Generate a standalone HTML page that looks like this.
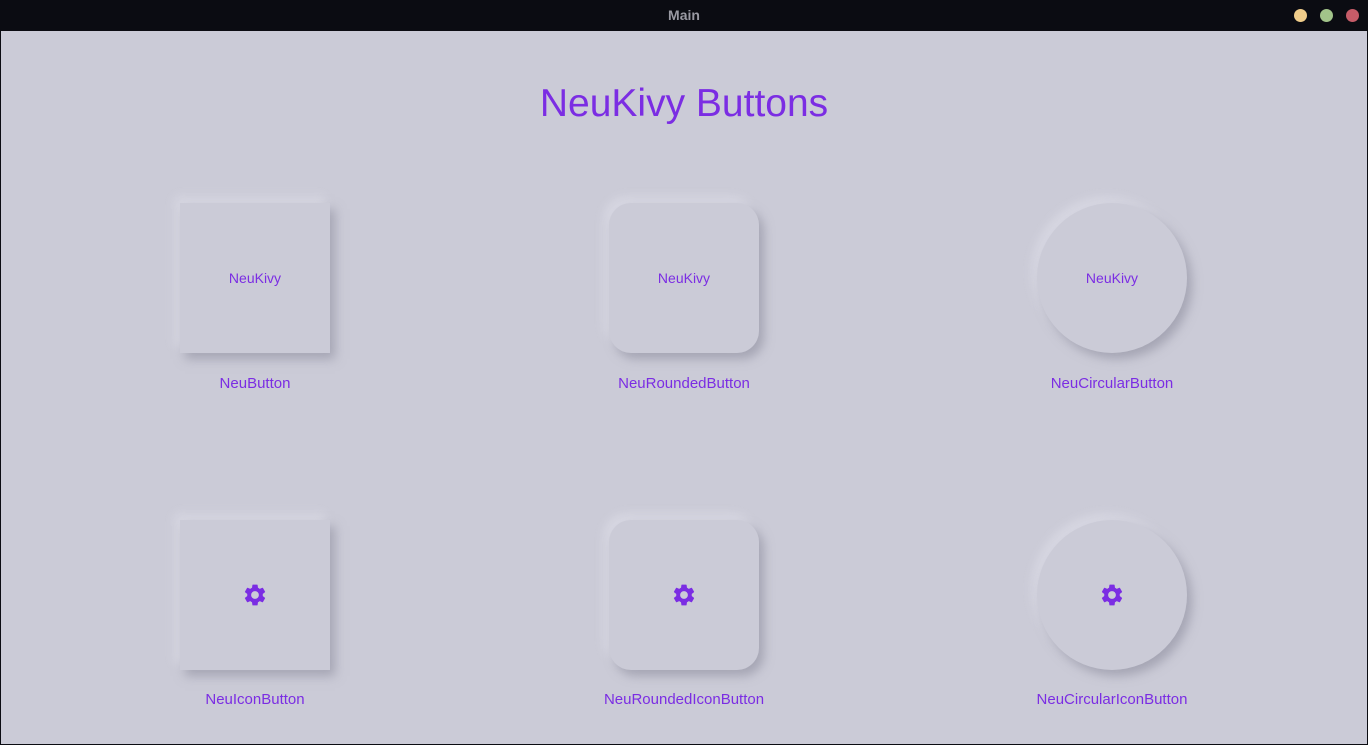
<!DOCTYPE html>
<html><head><meta charset="utf-8"><style>
*{margin:0;padding:0;box-sizing:border-box}
body{width:1368px;height:745px;background:#cbcbd7;font-family:"Liberation Sans",sans-serif;position:relative;overflow:hidden;border:1px solid #0b0c12}
.bar{position:absolute;left:-1px;top:-1px;width:1368px;height:31px;background:#0b0c12;color:#9a9aa3;font-weight:bold;font-size:14px;text-align:center;line-height:31px}
.dot{position:absolute;top:9px;width:13px;height:13px;border-radius:50%}
h1{position:absolute;top:81px;left:-1px;width:1368px;text-align:center;font-weight:normal;font-size:39px;color:#7b2de3}
.b{position:absolute;width:150px;height:150px;background:#cbcbd7;box-shadow:5px 6px 10px rgba(150,150,165,.7),-5px -6px 10px rgba(225,225,235,.6);display:flex;align-items:center;justify-content:center;color:#7b2de3;font-size:14px}
.r{border-radius:22px}.c{border-radius:50%}
.l{position:absolute;width:300px;text-align:center;color:#7b2de3;font-size:15px}
</style></head><body>
<div class="bar">Main
<div class="dot" style="left:1294px;background:#f0cd8a"></div>
<div class="dot" style="left:1320px;background:#a2c48a"></div>
<div class="dot" style="left:1346px;background:#c65c68"></div></div>
<h1>NeuKivy Buttons</h1>
<div class="b" style="left:179px;top:202px">NeuKivy</div>
<div class="b r" style="left:608px;top:202px">NeuKivy</div>
<div class="b c" style="left:1036px;top:202px">NeuKivy</div>
<div class="l" style="left:104px;top:374px">NeuButton</div>
<div class="l" style="left:533px;top:374px">NeuRoundedButton</div>
<div class="l" style="left:961px;top:374px">NeuCircularButton</div>
<svg width="0" height="0" style="position:absolute"><symbol id="g" viewBox="0 0 24 24"><path fill="#7b2de3" d="M19.14 12.94c.04-.3.06-.61.06-.94s-.02-.64-.07-.94l2.03-1.58a.49.49 0 0 0 .12-.61l-1.920-3.32a.49.49 0 0 0-.59-.22l-2.39.96c-.5-.38-1.03-.7-1.62-.94l-.36-2.54a.48.48 0 0 0-.48-.41h-3.84c-.24 0-.43.17-.47.41l-.36 2.54c-.59.24-1.130.57-1.62.94l-2.39-.96a.48.48 0 0 0-.59.22L2.74 8.87c-.12.21-.08.47.12.61l2.03 1.58c-.05.3-.09.63-.09.94s.02.64.07.94l-2.03 1.58a.49.49 0 0 0-.12.61l1.92 3.32c.12.22.37.29.59.22l2.39-.96c.5.38 1.03.7 1.62.94l.36 2.54c.05.24.24.41.48.41h3.84c.24 0 .44-.17.47-.41l.36-2.54c.59-.24 1.13-.56 1.62-.94l2.39.96c.22.08.47 0 .59-.22l1.92-3.32c.12-.22.07-.47-.12-.61l-2.01-1.58zM12 15.6A3.6 3.6 0 1 1 12 8.4a3.6 3.6 0 0 1 0 7.2z"/></symbol></svg>
<div class="b" style="left:179px;top:519px"><svg width="26" height="26"><use href="#g"/></svg></div>
<div class="b r" style="left:608px;top:519px"><svg width="26" height="26"><use href="#g"/></svg></div>
<div class="b c" style="left:1036px;top:519px"><svg width="26" height="26"><use href="#g"/></svg></div>
<div class="l" style="left:104px;top:690px">NeuIconButton</div>
<div class="l" style="left:533px;top:690px">NeuRoundedIconButton</div>
<div class="l" style="left:961px;top:690px">NeuCircularIconButton</div>
</body></html>
